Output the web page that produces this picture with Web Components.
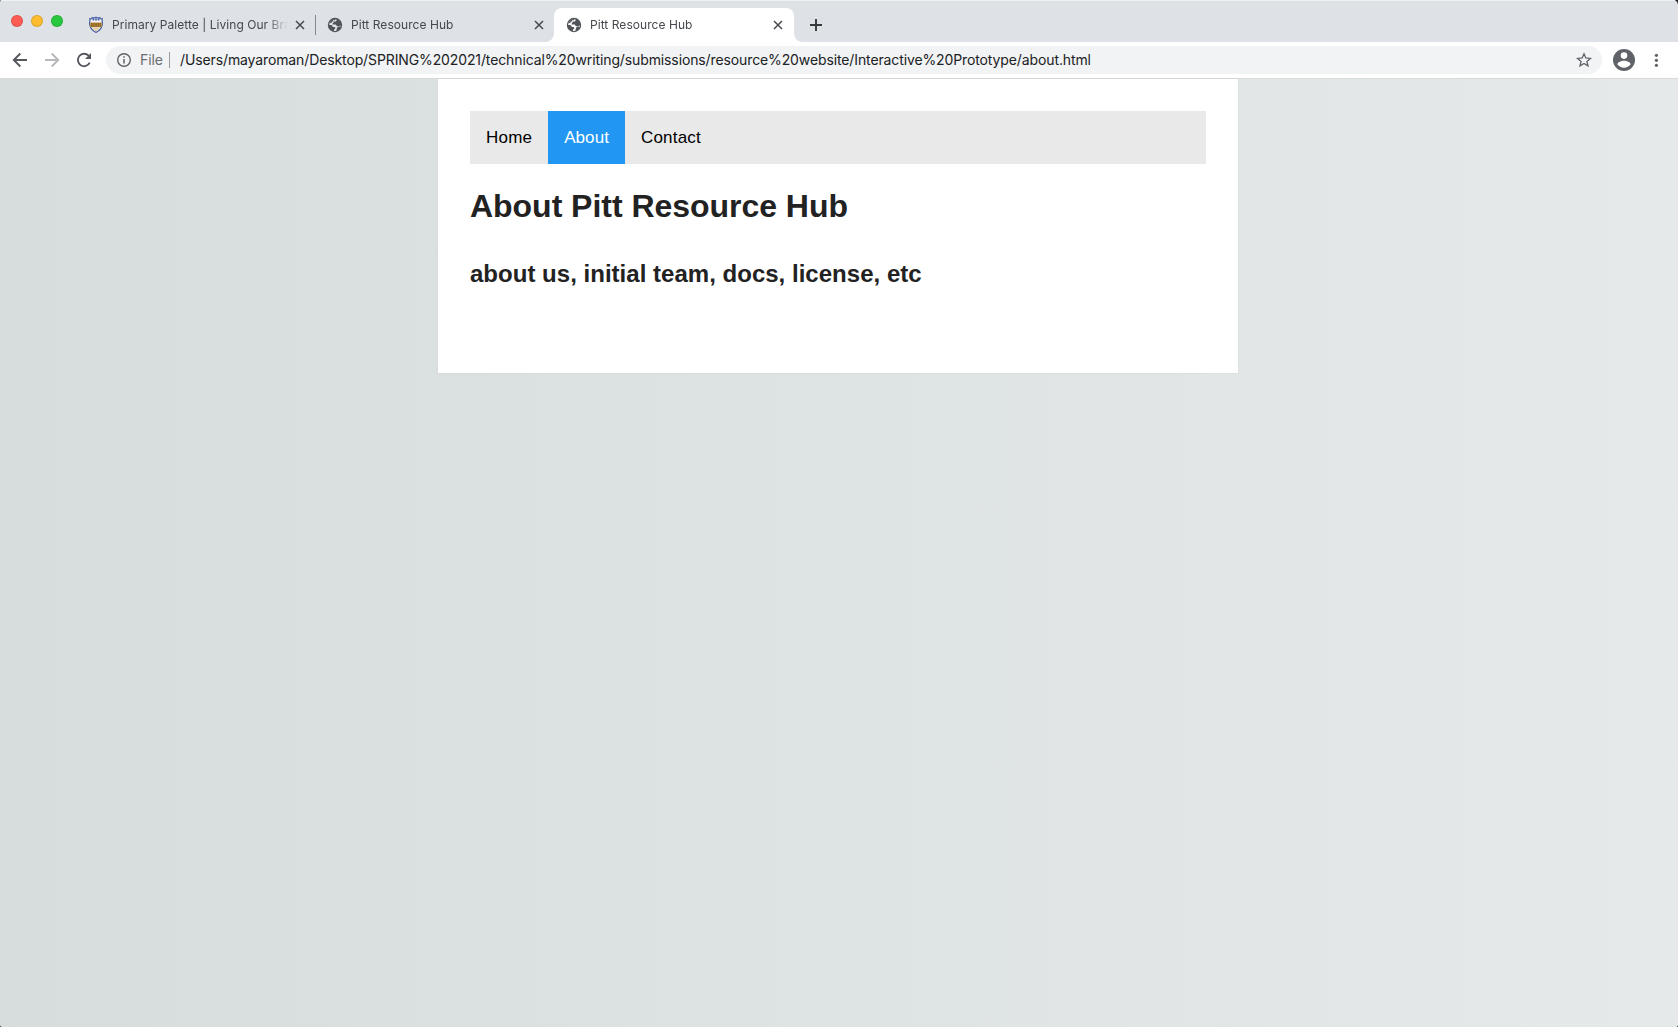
<!DOCTYPE html>
<html lang="en"><head><meta charset="utf-8"><title>Pitt Resource Hub</title>
<style>html,body{margin:0;height:100%;overflow:hidden;background:#222426}</style></head>
<body>
<browser-window>
  <tab-strip slot="tabs">
    <browser-tab icon="shield" divider>Primary Palette | Living Our Brand</browser-tab>
    <browser-tab icon="globe">Pitt Resource Hub</browser-tab>
    <browser-tab icon="globe" active>Pitt Resource Hub</browser-tab>
  </tab-strip>
  <address-bar slot="toolbar" scheme="File">/Users/mayaroman/Desktop/SPRING%202021/technical%20writing/submissions/resource%20website/Interactive%20Prototype/about.html</address-bar>
  <hub-page>
    <nav-bar slot="nav">
      <nav-item>Home</nav-item><nav-item active>About</nav-item><nav-item>Contact</nav-item>
    </nav-bar>
    <span slot="title">About Pitt Resource Hub</span>
    <span slot="subtitle">about us, initial team, docs, license, etc</span>
  </hub-page>
</browser-window>
<script>
const define=(name,html)=>customElements.define(name,class extends HTMLElement{
  constructor(){super();this.attachShadow({mode:'open'}).innerHTML=typeof html==='function'?html(this):html;}
});
const ICONS={
 shield:`<svg width="16" height="18" viewBox="0 0 16 18"><path d="M1.800 2.800C3 3 3.800 2.400 4.400 1.600 5.400 2.300 6.800 2 8 1.200c1.200.8 2.600 1.100 3.600.4.600.8 1.400 1.400 2.600 1.200-.5 1.500.3 2.800.2 4.800-.1 4.200-2.400 7-6.400 8.900C4 14.600 1.700 11.800 1.600 7.600 1.500 5.600 2.300 4.300 1.800 2.800z" fill="#f3f4f7" stroke="#4a64a6" stroke-width="1.300"/><path d="M4.500 3.500h7" stroke="#4a64a6" stroke-width="1.800" stroke-dasharray="1.800 .8"/><path d="M2.300 6.500h11.400v4.700H2.300z" fill="#c48a2c"/><path d="M3 8h10M3 10h10" stroke="#4d4536" stroke-width="1" stroke-dasharray="1.400 .8"/><path d="M5 12.800h6M6.500 14.300h3" stroke="#d9b069" stroke-width=".9"/></svg>`,
 globe:`<svg width="16" height="16" viewBox="0 0 16 16"><circle cx="8" cy="8" r="7.200" fill="#505357"/><path d="M9.500 2.300v.9c0 .8-.6 1.300-1.400 1.300H6.500v1.100c0 .5-.4.800-.9.800v1h2.600c1 0 1.300.7 1.300 1.700h2.600c.7 0 1.100-.4 1.700-1.200.2 3.300-2.500 6-5.700 6.100H7v-1.600c.8-.1 1.300-.6 1.300-1.300 0-.6-.5-1-1.200-1H5.700c0-1.500-.7-2.200-2-2.200H2.200C2.200 4.500 5.400 1.700 9.500 2.300z" fill="#dee1e6"/><path d="M2.500 6.500C3.200 3.500 6 1.800 8.700 2.100L7.800 3.300H6.200L5 5.300z" fill="#505357"/><path d="M10.700 9.500h3.200c-.6 2.800-2.500 4.400-4.700 4.700l.5-2.200z" fill="#505357"/></svg>`
};
define('browser-window',`<style>:host{display:flex;flex-direction:column;height:100vh;overflow:hidden;border-radius:2px 5px 2px 2px;font-family:Inter,sans-serif}</style>
<slot name="tabs"></slot><slot name="toolbar"></slot><slot></slot>`);
define('tab-strip',`<style>:host{display:flex;height:42px;background:#dee1e6;box-sizing:border-box;border-top:1px solid #eef0f2}
.lights{display:flex;gap:8px;padding:14px 13px 0 11px}.lights i{width:12px;height:12px;border-radius:50%;box-sizing:border-box;border:.5px solid #0002}
.tabs{display:flex;padding-top:7px}svg{margin:17px 0 0 15px}</style>
<div class="lights"><i style="background:#ff5c54"></i><i style="background:#febc2f"></i><i style="background:#27c840"></i></div>
<div class="tabs"><slot></slot></div>
<svg width="14" height="14" viewBox="0 0 14 14"><path d="M7 1v12M1 7h12" stroke="#36383c" stroke-width="1.900"/></svg>`);
define('browser-tab',el=>`<style>:host{display:flex;align-items:center;position:relative;box-sizing:border-box;width:239px;height:34px;padding:0 8px 1px 12px;font-size:12px;color:#45484d}
:host([active]){background:#fff;border-radius:8px 8px 0 0;width:240px;padding-right:9px}
:host([active])::before,:host([active])::after{content:"";position:absolute;bottom:0;width:8px;height:8px}
:host([active])::before{left:-8px;background:radial-gradient(circle at 0 0,#0000 7.500px,#fff 8px)}
:host([active])::after{right:-8px;background:radial-gradient(circle at 100% 0,#0000 7.500px,#fff 8px)}
:host([divider])::after{content:"";position:absolute;right:-1px;top:7px;width:1px;height:20px;background:#85888c}
.label{flex:1;min-width:0;margin:0 5px 0 8px;overflow:hidden;white-space:nowrap;letter-spacing:.05px;-webkit-mask:linear-gradient(90deg,#000 calc(100% - 22px),#0000)}
svg{flex:none}:host([active]) svg path[fill="#dee1e6"]{fill:#fff}</style>
${ICONS[el.getAttribute('icon')]}<span class="label"><slot></slot></span>
<svg width="14" height="14" viewBox="0 0 14 14"><path d="M3 3l8 8M11 3l-8 8" stroke="#45484d" stroke-width="1.500"/></svg>`);
define('address-bar',el=>`<style>:host{display:flex;align-items:center;box-sizing:border-box;height:37px;padding-left:10px;background:#fff;border-bottom:1px solid #d8dada;font-size:14px;color:#202124}
svg{flex:none}.nav{display:flex;gap:12px;margin-right:12px}
.pill{display:flex;align-items:center;width:1496px;height:28px;border-radius:14px;background:#f1f3f4;box-sizing:border-box;padding:0 9px}
.scheme{color:#6a6d71;margin-left:7px;width:29px;padding-bottom:1px;letter-spacing:-.1px}.sep{width:1px;height:16px;background:#9a9da0;margin-right:10px}
.url{flex:1;white-space:nowrap;letter-spacing:-.117px;padding-bottom:1px}
.end{display:flex;align-items:center;margin-left:10px;gap:10px}</style>
<div class="nav">
<svg width="20" height="20" viewBox="0 0 20 20"><path d="M17 10H4M10.300 3.500 3.800 10l6.500 6.500" fill="none" stroke="#55585d" stroke-width="1.900"/></svg>
<svg width="20" height="20" viewBox="0 0 20 20"><path d="M3 10h13M9.700 3.500l6.500 6.500-6.500 6.500" fill="none" stroke="#b6b8bb" stroke-width="1.900"/></svg>
<svg width="20" height="20" viewBox="0 0 20 20"><path d="M15.700 12.600A6.200 6.200 0 1 1 14.600 5.700L16 7" fill="none" stroke="#55585d" stroke-width="1.900"/><path d="M17 3v6h-6z" fill="#55585d"/></svg></div>
<div class="pill"><svg width="18" height="18" viewBox="0 0 18 18"><circle cx="9" cy="9" r="6.300" fill="none" stroke="#5f6368" stroke-width="1.400"/><path d="M9 8v4.500M9 5.200v1.500" stroke="#5f6368" stroke-width="1.500"/></svg>
<span class="scheme">${el.getAttribute('scheme')}</span><i class="sep"></i><span class="url"><slot></slot></span>
<svg width="18" height="18" viewBox="0 0 18 18"><path d="M9 2.800l1.800 4.200 4.600.4-3.500 3 1.100 4.500L9 12.500l-4 2.400 1.100-4.500-3.500-3 4.600-.4z" fill="none" stroke="#5f6368" stroke-width="1.300"/></svg></div>
<div class="end"><svg width="24" height="24" viewBox="0 0 24 24"><circle cx="12" cy="12" r="11" fill="#5f6368"/><circle cx="12" cy="7.600" r="3.300" fill="#fff"/><path d="M5.400 16.200c0-2.300 4.400-3.500 6.600-3.500s6.600 1.200 6.600 3.500c-1.500 2.200-3.900 3.500-6.600 3.500s-5.100-1.300-6.600-3.500z" fill="#fff"/></svg>
<svg width="20" height="20" viewBox="0 0 20 20"><g fill="#5f6368"><circle cx="10.400" cy="5.300" r="1.600"/><circle cx="10.400" cy="10.300" r="1.600"/><circle cx="10.400" cy="15.300" r="1.600"/></g></svg></div>`);
define('hub-page',`<style>:host{display:block;flex:1;box-sizing:border-box;padding-right:2px;background:linear-gradient(90deg,#d7dddc,#e5e9ea);font-family:"Liberation Sans",Arial,sans-serif;color:#222}
main{box-sizing:border-box;width:800px;height:294px;margin:0 auto;padding:32px;background:#fff;box-shadow:0 0 1px #0002}
h1{font-size:32px;line-height:38px;margin:23px 0 0;white-space:nowrap;letter-spacing:-.03px}h2{font-size:24px;line-height:28px;margin:35px 0 0;white-space:nowrap;letter-spacing:.02px}</style>
<main><slot name="nav"></slot><h1><slot name="title"></slot></h1><h2><slot name="subtitle"></slot></h2></main>`);
define('nav-bar',`<style>:host{display:flex;height:53px;background:#e9e9e9}</style><slot></slot>`);
define('nav-item',`<style>:host{display:flex;align-items:center;padding:0 16px;font-size:17px;letter-spacing:.2px;color:#000}:host([active]){background:#2196f3;color:#fff;letter-spacing:.08px}</style><slot></slot>`);
</script>
</body></html>
